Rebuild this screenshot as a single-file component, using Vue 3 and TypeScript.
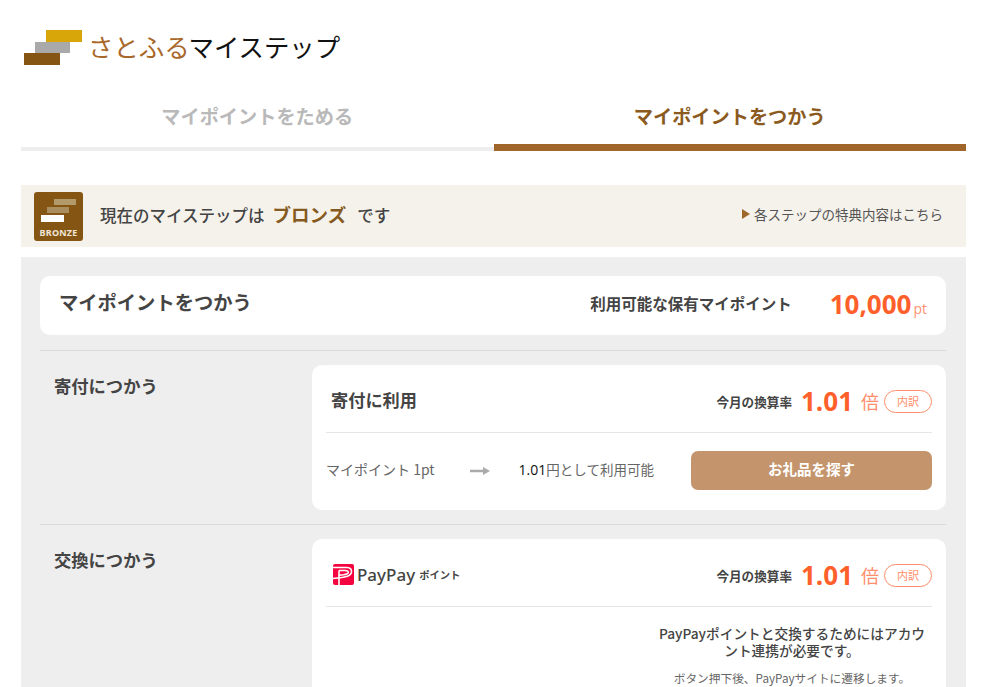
<script setup lang="ts">
const tabs: { label: string; active: boolean }[] = [
  { label: 'マイポイントをためる', active: false },
  { label: 'マイポイントをつかう', active: true },
]
</script>

<template>
  <div class="page">
    <header class="logo">
      <svg class="logo-mark" width="60" height="36" viewBox="0 0 60 36" aria-hidden="true">
        <rect x="22" y="0" width="36" height="12" fill="#d9a60a" />
        <rect x="11" y="12" width="35" height="11" fill="#a9a9a9" />
        <rect x="0" y="23" width="36" height="12" fill="#855514" />
      </svg>
      <span class="logo-text"><span class="logo-brown">さとふる</span>マイステップ</span>
    </header>

    <nav class="tabs">
      <div v-for="tab in tabs" :key="tab.label" class="tab" :class="{ active: tab.active }">{{ tab.label }}</div>
    </nav>

    <section class="banner">
      <div class="badge">
        <svg width="35" height="24" viewBox="0 0 35 24" aria-hidden="true">
          <rect x="13" y="0" width="22" height="6" fill="#b39a6b" />
          <rect x="6" y="8" width="22" height="6" fill="#a98d5e" />
          <rect x="0" y="16" width="23" height="7" fill="#fff" />
        </svg>
        <span class="badge-label">BRONZE</span>
      </div>
      <p class="banner-text">現在のマイステップは<strong>ブロンズ</strong>です</p>
      <a class="banner-link"><i class="caret"></i>各ステップの特典内容はこちら</a>
    </section>

    <main class="panel">
      <div class="summary">
        <h1>マイポイントをつかう</h1>
        <span class="summary-label">利用可能な保有マイポイント</span>
        <span class="summary-value">10,000<small>pt</small></span>
      </div>

      <section class="row">
        <h2>寄付につかう</h2>
        <div class="card">
          <div class="card-head">
            <h3>寄付に利用</h3>
            <div class="rate">
              <span class="rate-label">今月の換算率</span>
              <span class="rate-num">1.01</span>
              <span class="rate-unit">倍</span>
              <span class="pill">内訳</span>
            </div>
          </div>
          <div class="card-body">
            <span class="from">マイポイント 1pt</span>
            <svg class="arrow" width="20" height="10" viewBox="0 0 20 10" aria-hidden="true">
              <path d="M0 5H15" stroke="#aaa" stroke-width="2.500" />
              <path d="M13 1L20 5L13 9Z" fill="#aaa" />
            </svg>
            <span class="to"><b>1.01</b>円として利用可能</span>
            <button class="cta" type="button">お礼品を探す</button>
          </div>
        </div>
      </section>

      <section class="row">
        <h2>交換につかう</h2>
        <div class="card">
          <div class="card-head">
            <div class="paypay">
              <svg width="21" height="21" viewBox="0 0 21 21" aria-hidden="true">
                <rect width="21" height="21" rx="2" fill="#f5053f" />
                <path d="M0 3.500H14C17.500 3.500 19 6 18.300 8.800C17.500 11.500 14 13 9 13.500L0 14.500" fill="none" stroke="#fff" stroke-width="1.600" />
                <path d="M6 6.500V21M6 6.500H12C14.500 6.500 15.500 7.500 15.200 8.800C14.800 10 13 10.500 10.500 10.800L6 11.200" fill="none" stroke="#fff" stroke-width="1.600" />
              </svg>
              <span class="paypay-name">PayPay</span>
              <span class="paypay-sub">ポイント</span>
            </div>
            <div class="rate">
              <span class="rate-label">今月の換算率</span>
              <span class="rate-num">1.01</span>
              <span class="rate-unit">倍</span>
              <span class="pill">内訳</span>
            </div>
          </div>
          <div class="card-note">
            <p class="note-main">PayPayポイントと交換するためにはアカウント連携が必要です。</p>
            <p class="note-sub">ボタン押下後、PayPayサイトに遷移します。</p>
          </div>
        </div>
      </section>
    </main>
  </div>
</template>

<style>
html,
body {
  margin: 0;
  background: #fff;
  overflow: hidden;
}
</style>

<style scoped>
.page {
  width: 982px;
  height: 687px;
  overflow: hidden;
  box-sizing: border-box;
  padding: 0 16px 0 21px;
  font-family: "Noto Sans CJK JP", "Noto Sans", sans-serif;
  color: #333;
}

h1,
h2,
h3,
p {
  margin: 0;
}

.logo {
  height: 90px;
  display: flex;
  align-items: flex-start;
  padding: 30px 0 0 3px;
  box-sizing: border-box;
}

.logo-mark {
  flex: none;
  display: block;
}

.logo-text {
  margin: -3px 0 0 4px;
  font-size: 25.400px;
  line-height: 38px;
  color: #111;
  white-space: nowrap;
}

.logo-brown {
  color: #a9682a;
}

.tabs {
  display: flex;
}

.tab {
  flex: 1;
  height: 61px;
  box-sizing: border-box;
  padding-top: 11px;
  text-align: center;
  font-size: 19.200px;
  line-height: 30px;
  font-weight: 700;
  color: #b9b9b9;
  border-bottom: 4px solid #eee;
}

.tab.active {
  color: #8a5a20;
  border-bottom: 7px solid #a0652a;
}

.banner {
  margin-top: 34px;
  height: 62px;
  background: #f5f2eb;
  display: flex;
  align-items: center;
  padding: 0 23px 0 13px;
}

.badge {
  width: 49px;
  height: 49px;
  flex: none;
  border-radius: 3px;
  background: #855514;
  display: flex;
  flex-direction: column;
  align-items: center;
  box-sizing: border-box;
  padding-top: 7px;
}

.badge svg {
  display: block;
  margin-bottom: 5px;
}

.badge-label {
  font-family: "Noto Sans", sans-serif;
  font-size: 9px;
  line-height: 10px;
  font-weight: 700;
  color: #f0e6d6;
  letter-spacing: 0.2px;
}

.banner-text {
  margin: -4px 0 0 17px;
  font-size: 16.500px;
  line-height: 24px;
  font-weight: 500;
  color: #444;
  white-space: nowrap;
}

.banner-text strong {
  margin: 0 11px 0 8px;
  font-size: 18.500px;
  font-weight: 700;
  color: #855a20;
}

.banner-link {
  margin: -4px 0 0 auto;
  display: flex;
  align-items: center;
  font-size: 13.500px;
  color: #555;
  white-space: nowrap;
}

.caret {
  width: 0;
  height: 0;
  margin-right: 4px;
  border-left: 8px solid #a0652a;
  border-top: 5px solid transparent;
  border-bottom: 5px solid transparent;
}

.panel {
  margin-top: 10px;
  width: 945px;
  background: #eee;
  padding: 19px 20px 40px 19px;
  box-sizing: border-box;
}

.summary {
  height: 59px;
  background: #fff;
  border-radius: 10px;
  display: flex;
  align-items: center;
  padding: 0 19px;
}

.summary h1 {
  font-size: 19.300px;
  line-height: 28px;
  font-weight: 700;
  color: #444;
  margin-top: -8px;
}

.summary-label {
  margin-left: auto;
  padding-bottom: 5px;
  font-size: 15.500px;
  font-weight: 700;
  color: #444;
}

.summary-value {
  margin-left: 38px;
  padding-bottom: 4px;
  font-family: "Open Sans", sans-serif;
  font-size: 26px;
  font-weight: 700;
  color: #ff5f2b;
  white-space: nowrap;
}

.summary-value small {
  margin-left: 2px;
  font-size: 14px;
  font-weight: 400;
  color: #ff9270;
}

.row {
  display: flex;
  align-items: flex-start;
  margin-top: 14px;
  padding-top: 14px;
  border-top: 1px solid #d9d9d9;
}

.row:first-of-type {
  margin-top: 15px;
}

.row h2 {
  width: 272px;
  flex: none;
  box-sizing: border-box;
  padding: 8px 0 0 14px;
  font-size: 17.300px;
  line-height: 26px;
  font-weight: 700;
  color: #444;
}

.card {
  flex: 1;
  background: #fff;
  border-radius: 10px;
  padding: 0 14px;
  box-sizing: border-box;
}

.card-head {
  height: 67px;
  display: flex;
  align-items: center;
  justify-content: space-between;
  border-bottom: 1px solid #e6e6e6;
  padding-left: 5px;
}

.card-head h3 {
  margin-top: 1px;
  font-size: 17.200px;
  font-weight: 700;
  color: #444;
}

.rate {
  display: flex;
  align-items: center;
  margin-top: 5px;
}

.rate-label {
  font-size: 12.600px;
  font-weight: 700;
  color: #444;
}

.rate-num {
  margin-left: 9px;
  font-family: "Open Sans", sans-serif;
  font-size: 26px;
  line-height: 30px;
  font-weight: 700;
  color: #ff5f2b;
}

.rate-unit {
  margin-left: 8px;
  font-size: 18px;
  color: #ff8f6c;
}

.pill {
  margin-left: 5px;
  width: 48px;
  height: 23px;
  box-sizing: border-box;
  border: 1px solid #ff8f6c;
  border-radius: 12px;
  text-align: center;
  font-size: 11px;
  line-height: 20px;
  color: #ff8f6c;
}

.card-body {
  height: 75px;
  display: flex;
  align-items: center;
  font-size: 13.500px;
  color: #666;
  padding-bottom: 2px;
}

.from {
  margin-bottom: 3px;
  font-size: 14px;
  white-space: nowrap;
}

.arrow {
  margin-left: 35px;
  flex: none;
}

.to {
  margin: 0 0 3px 29px;
  white-space: nowrap;
}

.to b {
  font-family: "Open Sans", sans-serif;
  font-size: 14px;
  font-weight: 500;
  color: #111;
}

.cta {
  margin-left: auto;
  width: 241px;
  height: 39px;
  border: 0;
  border-radius: 7px;
  background: #c4956c;
  color: #fff;
  font: 700 14.500px "Noto Sans CJK JP", sans-serif;
  padding: 0 0 5px;
}

.paypay {
  display: flex;
  align-items: center;
  color: #444;
  margin: 4px 0 0 2px;
}

.paypay svg {
  display: block;
}

.paypay-name {
  margin-left: 3px;
  font-family: "Noto Sans", sans-serif;
  font-size: 17px;
  font-weight: 500;
}

.paypay-sub {
  margin-left: 4px;
  font-size: 10.300px;
  font-weight: 700;
}

.card-note {
  width: 272px;
  margin: 0 4px 0 auto;
  padding: 18px 0 60px;
  text-align: center;
}

.note-main {
  font-size: 13.700px;
  line-height: 17px;
  font-weight: 500;
  color: #444;
}

.note-sub {
  margin-top: 11px;
  font-size: 11.700px;
  line-height: 16px;
  color: #666;
}
</style>
